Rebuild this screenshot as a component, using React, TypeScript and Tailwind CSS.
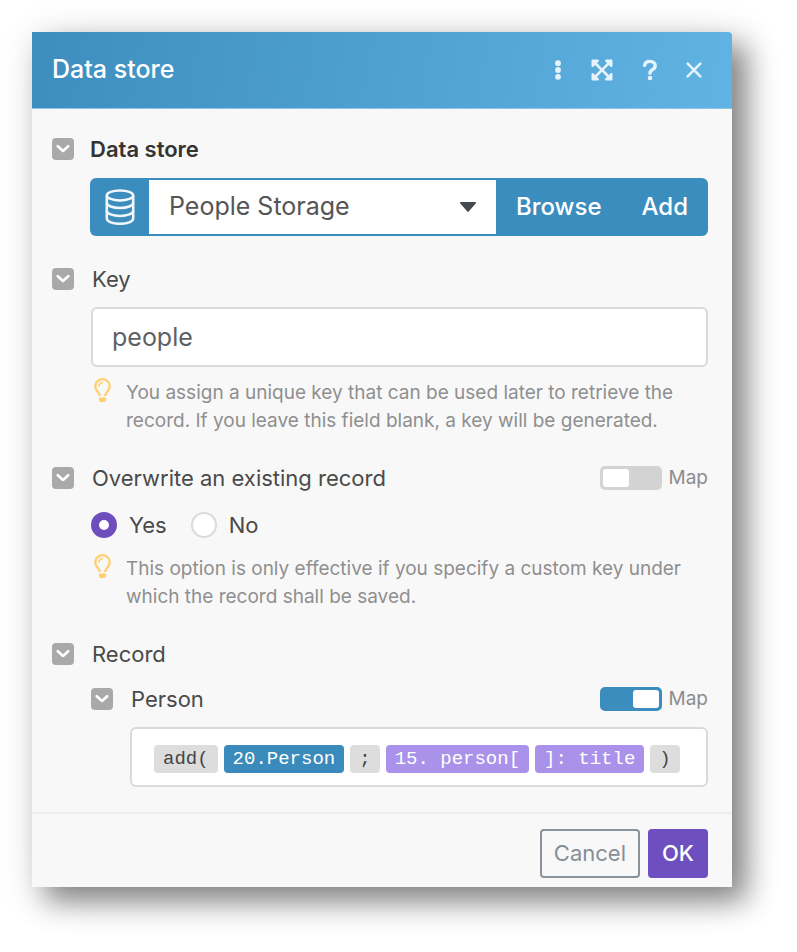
import React, { useState } from 'react';
import { FaExpandArrowsAlt, FaRegLightbulb } from 'react-icons/fa';

const DotsIcon = () => (
  <svg viewBox="0 0 8 20" className="h-5 w-2" fill="currentColor" aria-hidden="true">
    <circle cx="4" cy="3.2" r="2.9" />
    <circle cx="4" cy="10" r="2.9" />
    <circle cx="4" cy="16.8" r="2.9" />
  </svg>
);

const QuestionIcon = () => (
  <svg viewBox="0 0 16 22" className="h-[22px] w-4" fill="none" aria-hidden="true">
    <path
      d="M2.600 6.400C3 3.900 5 2.400 7.900 2.400c3.100 0 5.300 1.700 5.300 4.300 0 2-1.200 3-2.700 4-1.600 1-2.500 1.700-2.500 3.600"
      stroke="currentColor"
      strokeWidth="3.4"
      strokeLinecap="round"
    />
    <circle cx="8" cy="19" r="2.3" fill="currentColor" />
  </svg>
);

const CloseIcon = () => (
  <svg viewBox="0 0 16 16" className="h-4 w-4" fill="none" aria-hidden="true">
    <path d="M1.7 1.7l12.6 12.6M14.3 1.7L1.7 14.3" stroke="currentColor" strokeWidth="2.6" strokeLinecap="round" />
  </svg>
);

const DatabaseIcon = () => (
  <svg viewBox="0 0 30 36" className="h-9 w-[30px]" fill="none" stroke="currentColor" strokeWidth="2.5" aria-hidden="true">
    <ellipse cx="15" cy="6.4" rx="13.2" ry="5" />
    <path d="M1.800 6.400v23.200c0 3 6 5.200 13.200 5.200s13.200-2.200 13.200-5.200V6.400" />
    <path d="M1.800 13.800c0 3 6 5.200 13.200 5.200s13.200-2.200 13.200-5.200" />
    <path d="M1.800 21.700c0 3 6 5.200 13.200 5.200s13.200-2.200 13.200-5.200" />
  </svg>
);

const Collapse: React.FC<{ label: string }> = ({ label }) => (
  <button
    type="button"
    aria-label={`Collapse ${label}`}
    className="flex h-[22px] w-[22px] shrink-0 items-center justify-center rounded bg-[#a9a9a9] text-white"
  >
    <svg viewBox="0 0 14 10" className="h-[10px] w-[14px]" fill="none" aria-hidden="true">
      <path d="M1.8 2.2L7 7L12.2 2.2" stroke="currentColor" strokeWidth="2.6" strokeLinecap="round" strokeLinejoin="round" />
    </svg>
  </button>
);

const Hint: React.FC<{ children: React.ReactNode }> = ({ children }) => (
  <div className="flex gap-[15px] pl-[3px]">
    <FaRegLightbulb className="h-6 w-[17px] shrink-0 text-[#ffcf70]" />
    <p className="pt-px text-[19px] leading-7 text-[#8f8f8f]">{children}</p>
  </div>
);

const MapSwitch: React.FC<{ id: string; defaultOn?: boolean }> = ({ id, defaultOn }) => (
  <label htmlFor={id} className="flex items-center gap-[7px] text-[19px] leading-7 text-[#8c8c8c]">
    <input
      id={id}
      type="checkbox"
      role="switch"
      defaultChecked={defaultOn}
      className="flex h-6 w-[62px] appearance-none items-center rounded-[5px] bg-[#d3d3d3] px-[3px] before:h-[18px] before:w-[26px] before:rounded-[3px] before:bg-white before:content-[''] checked:justify-end checked:bg-[#3b8dbd]"
    />
    Map
  </label>
);

const chips = [
  { text: 'add(', style: 'bg-[#dddddd] text-[#444444]' },
  { text: '20.Person', style: 'bg-[#3a8bbb] text-white' },
  { text: ';', style: 'bg-[#dddddd] text-[#444444]' },
  { text: '15. person[', style: 'bg-[#aa92ea] text-white' },
  { text: ']: title', style: 'bg-[#aa92ea] text-white' },
  { text: ')', style: 'bg-[#dddddd] text-[#444444]' },
];

const App: React.FC = () => {
  const [key, setKey] = useState('people');
  const [overwrite, setOverwrite] = useState('yes');

  const radioClass =
    'h-[26px] w-[26px] appearance-none rounded-full border-2 border-[#dadada] bg-white checked:border-8 checked:border-[#6e4dbd]';

  return (
    <div className="min-h-screen bg-white pt-8 pr-[65px] pb-[65px] pl-8 font-['Inter',sans-serif] text-[#4a4a4a]">
      <form
        onSubmit={(e) => e.preventDefault()}
        className="rounded-tr-sm bg-[#f8f8f8] shadow-[14px_14px_28px_rgba(0,0,0,0.42),8px_8px_44px_rgba(0,0,0,0.16)]"
      >
        <header className="flex h-[77px] items-center justify-between rounded-tr-sm border-b border-[#8cc4e6] bg-linear-[100deg] from-[#3d8ebe] to-[#60b3e3] pr-[30px] pl-5">
          <h1 className="text-[25px] font-medium text-white">Data store</h1>
          <div className="flex items-center text-[#e6f3fb]">
            <button type="button" aria-label="More options" className="mr-7">
              <DotsIcon />
            </button>
            <button type="button" aria-label="Expand" className="mr-7">
              <FaExpandArrowsAlt className="h-6 w-6" />
            </button>
            <button type="button" aria-label="Help" className="mr-7">
              <QuestionIcon />
            </button>
            <button type="button" aria-label="Close">
              <CloseIcon />
            </button>
          </div>
        </header>

        <div className="flex flex-col gap-[29px] pt-[26px] pr-6 pb-[25px] pl-5">
          <section>
            <div className="flex items-center gap-4">
              <Collapse label="Data store" />
              <label htmlFor="store" className="text-[22px] leading-7 font-semibold text-[#333333]">
                Data store
              </label>
            </div>
            <div className="mt-[15px] ml-[38px] flex h-[58px] rounded-md bg-[#3b8dbd] text-2xl">
              <span className="flex w-[59px] items-center justify-center text-[#f2f8fb]">
                <DatabaseIcon />
              </span>
              <div className="relative my-[2px] flex-1 bg-white">
                <select id="store" className="h-full w-full appearance-none pr-12 pl-5 text-[25px] text-[#555555]">
                  <option>People Storage</option>
                </select>
                <svg
                  viewBox="0 0 16 10"
                  className="pointer-events-none absolute top-[22px] right-5 h-[10px] w-4"
                  fill="#444a50"
                  aria-hidden="true"
                >
                  <path d="M1 0h14c.9 0 1.300 1 .7 1.600L8.700 9.400a1 1 0 0 1-1.400 0L.3 1.600C-.3 1 .1 0 1 0z" />
                </svg>
              </div>
              <button type="button" className="px-5 font-medium text-white">
                Browse
              </button>
              <button type="button" className="px-5 font-medium text-white">
                Add
              </button>
            </div>
          </section>

          <section>
            <div className="flex items-center gap-[18px]">
              <Collapse label="Key" />
              <label htmlFor="key" className="text-[22px] leading-7">
                Key
              </label>
            </div>
            <div className="mt-[14px] ml-[39px]">
              <input
                id="key"
                type="text"
                value={key}
                onChange={(e) => setKey(e.target.value)}
                className="mb-[11px] block h-[60px] w-full rounded-md border-2 border-[#dadada] bg-white px-[19px] text-[25px] text-[#5c6166] focus:outline-none"
              />
              <Hint>
                You assign a unique key that can be used later to retrieve the record. If you leave this field blank, a
                key will be generated.
              </Hint>
            </div>
          </section>

          <section>
            <div className="flex items-center gap-[18px]">
              <Collapse label="Overwrite an existing record" />
              <h2 id="overwrite" className="flex-1 text-[22px] leading-7">
                Overwrite an existing record
              </h2>
              <MapSwitch id="map-overwrite" />
            </div>
            <div className="ml-[39px]">
              <div
                role="radiogroup"
                aria-labelledby="overwrite"
                className="mt-[19px] mb-[15px] flex gap-6 text-[22px] leading-7"
              >
                <label className="flex items-center gap-3">
                  <input
                    type="radio"
                    name="overwrite"
                    checked={overwrite === 'yes'}
                    onChange={() => setOverwrite('yes')}
                    className={radioClass}
                  />
                  Yes
                </label>
                <label className="flex items-center gap-3">
                  <input
                    type="radio"
                    name="overwrite"
                    checked={overwrite === 'no'}
                    onChange={() => setOverwrite('no')}
                    className={radioClass}
                  />
                  No
                </label>
              </div>
              <Hint>
                This option is only effective if you specify a custom key under which the record shall be saved.
              </Hint>
            </div>
          </section>

          <section>
            <div className="flex items-center gap-[18px]">
              <Collapse label="Record" />
              <h2 className="text-[22px] leading-7">Record</h2>
            </div>
            <div className="mt-[17px] ml-[39px] flex items-center gap-[18px]">
              <Collapse label="Person" />
              <h3 className="flex-1 text-[22px] leading-7">Person</h3>
              <MapSwitch id="map-person" defaultOn />
            </div>
            <div className="mt-[14px] ml-[78px] flex min-h-[60px] flex-wrap items-center gap-[6px] rounded-md border-2 border-[#dadada] bg-white pt-1 pl-[22px] font-['Liberation_Mono',monospace] text-[19px] leading-7">
              {chips.map((chip) => (
                <span key={chip.text} className={`rounded px-[9px] whitespace-pre ${chip.style}`}>
                  {chip.text}
                </span>
              ))}
            </div>
          </section>
        </div>

        <footer className="flex justify-end gap-2 border-t-2 border-[#ededed] pt-[15px] pr-6 pb-[9px] text-[22px]">
          <button
            type="button"
            className="h-[49px] rounded border-2 border-[#8a939b] px-3 text-[#868e96]"
          >
            Cancel
          </button>
          <button type="submit" className="h-[49px] rounded bg-[#6e4fbf] px-[14px] font-medium text-white">
            OK
          </button>
        </footer>
      </form>
    </div>
  );
};

export default App;
